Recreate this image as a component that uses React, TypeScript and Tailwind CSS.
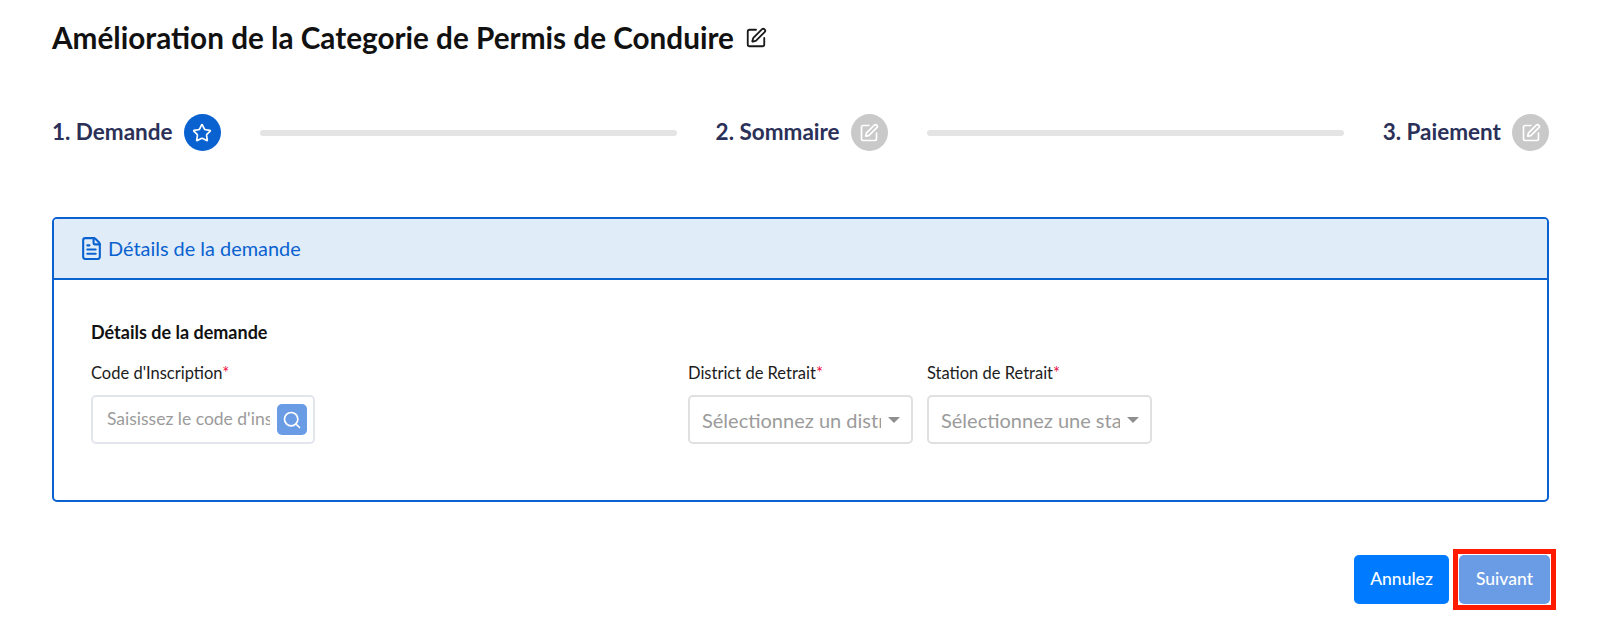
import { FileText, Search, SquarePen, Star } from 'lucide-react';

const Step = ({ label, active }: { label: string; active?: boolean }) => (
  <div className="flex items-center gap-[11px] shrink-0">
    <span className="text-[22.5px] font-bold leading-none text-[#2b3058] -mt-[1px]">{label}</span>
    <span
      className={`flex items-center justify-center h-[37px] w-[37px] rounded-full ${
        active ? 'bg-[#0a62d0]' : 'bg-[#c9c9c9]'
      }`}
    >
      {active ? (
        <Star size={20} strokeWidth={2} className="text-white" />
      ) : (
        <SquarePen size={20} strokeWidth={2} className="text-white" />
      )}
    </span>
  </div>
);

const Label = ({ text }: { text: string }) => (
  <div className="text-[16.5px] leading-5 text-[#1c1c1c] mb-[12px]">
    {text}
    <span className="text-[#f0133f]">*</span>
  </div>
);

const SelectBox = ({ label, placeholder }: { label: string; placeholder: string }) => (
  <div className="w-[225px]">
    <Label text={label} />
    <div className="flex items-center h-[49px] rounded-[5px] border-2 border-[#e0e0e0] pl-[12px] pr-[11px] bg-white">
      <span className="flex-1 overflow-hidden whitespace-nowrap text-[20px] text-[#9b9b9b]">
        {placeholder}
      </span>
      <span className="ml-[7px] h-0 w-0 border-x-[6px] border-t-[6px] border-x-transparent border-t-[#8f8f8f]" />
    </div>
  </div>
);

export default function App() {
  return (
    <div className="w-[1600px] h-[630px] bg-white overflow-hidden pl-[52px] pr-[51px] pt-[19px] font-['Lato','Noto_Sans',sans-serif]">
      <div className="flex items-center gap-[11px] h-[38px]">
        <h1 className="text-[29.7px] font-bold leading-none text-[#111111]">
          Amélioration de la Categorie de Permis de Conduire
        </h1>
        <SquarePen size={22} strokeWidth={2} className="text-[#1a1a1a]" />
      </div>

      <div className="flex items-center mt-[57px]">
        <Step label="1. Demande" active />
        <div className="flex-1 h-[6px] mx-[39px] rounded-full bg-[#e4e4e4]" />
        <Step label="2. Sommaire" />
        <div className="flex-1 h-[6px] mx-[39px] rounded-full bg-[#e4e4e4]" />
        <Step label="3. Paiement" />
      </div>

      <div className="mt-[66px] h-[285px] rounded-[5px] border-2 border-[#0a62d0] overflow-hidden">
        <div className="flex items-center gap-[4px] h-[61px] pl-[25px] bg-[#e0ecf8] border-b-2 border-[#0a62d0] text-[#0a62d0]">
          <FileText size={25} strokeWidth={2} />
          <span className="text-[19.9px]">Détails de la demande</span>
        </div>
        <div className="pl-[37px] pt-[42px]">
          <div className="text-[18px] font-bold leading-5 text-[#111111] mb-[21px]">Détails de la demande</div>
          <div className="flex">
            <div className="w-[224px]">
              <Label text="Code d'Inscription" />
              <div className="flex items-center h-[49px] rounded-[5px] border-2 border-[#e2e6ec] pl-[14px] pr-[6px] bg-white">
                <span className="flex-1 overflow-hidden whitespace-nowrap text-[17.5px] text-[#9b9b9b]">
                  Saisissez le code d'inscription
                </span>
                <span className="ml-[7px] flex items-center justify-center shrink-0 h-[31px] w-[30px] rounded-[5px] bg-[#6a9ce6]">
                  <Search size={20} strokeWidth={2} className="text-white" />
                </span>
              </div>
            </div>
            <div className="flex gap-[14px] ml-[373px]">
              <SelectBox label="District de Retrait" placeholder="Sélectionnez un district" />
              <SelectBox label="Station de Retrait" placeholder="Sélectionnez une station" />
            </div>
          </div>
        </div>
      </div>

      <div className="flex justify-end items-center gap-[4px] mt-[47px] -mr-[7px]">
        <button className="h-[49px] w-[95px] rounded-[5px] bg-[#007bff] text-[17.5px] font-medium text-white">
          Annulez
        </button>
        <div className="border-[5px] border-[#ff1a00] p-[1px]">
          <button className="block h-[49px] w-[91px] rounded-[5px] bg-[#6a9ce6] text-[17.5px] font-medium text-white">
            Suivant
          </button>
        </div>
      </div>
    </div>
  );
}
